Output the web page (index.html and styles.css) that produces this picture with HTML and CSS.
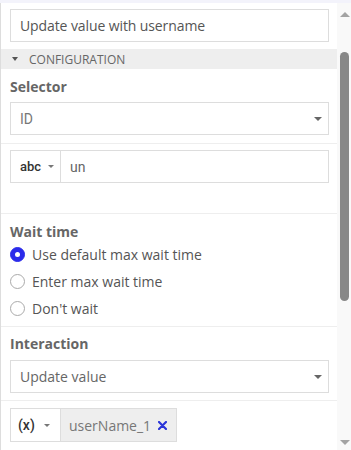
FILE: index.html
```html
<!DOCTYPE html>
<html lang="en">
<head>
    <meta charset="UTF-8">
    <meta name="viewport" content="width=device-width, initial-scale=1.0">
    <title>Step configuration</title>
    <link rel="stylesheet" href="styles.css">
</head>
<body>
    <div class="top-strip"></div>
    <div class="frame">
        <div class="panel">
            <div class="name-row">
                <div class="text-box">Update value with username</div>
            </div>

            <div class="section-header"><span class="caret header-caret"></span>Configuration</div>

            <div class="section first">
                <div class="field-label">Selector</div>
                <div class="select-box select-roboto"><span>ID</span><span class="caret"></span></div>
            </div>

            <div class="section tall">
                <div class="input-group">
                    <div class="type-btn">abc <span class="caret small"></span></div>
                    <div class="group-input">un</div>
                </div>
            </div>

            <div class="section radios">
                <div class="field-label">Wait time</div>
                <div class="radio-row"><span class="radio checked"></span>Use default max wait time</div>
                <div class="radio-row"><span class="radio"></span>Enter max wait time</div>
                <div class="radio-row"><span class="radio"></span>Don't wait</div>
            </div>

            <div class="section interaction">
                <div class="field-label">Interaction</div>
                <div class="select-box"><span>Update value</span><span class="caret"></span></div>
            </div>

            <div class="section">
                <div class="input-group var-group">
                    <div class="type-btn var-btn">(x) <span class="caret small"></span></div>
                    <div class="var-tag">userName_1
                        <svg class="tag-close" width="9" height="9" viewBox="0 0 9 9">
                            <path d="M1 1 L8 8 M8 1 L1 8" stroke="#2b35d8" stroke-width="2.2" stroke-linecap="round"/>
                        </svg>
                    </div>
                </div>
            </div>
        </div>

        <div class="scrollbar">
            <span class="sb-arrow up"></span>
            <div class="sb-track"><div class="sb-thumb"></div></div>
            <span class="sb-arrow down"></span>
        </div>
    </div>
</body>
</html>
```

FILE: styles.css
```css
body {
    font-family: "Open Sans", Arial, sans-serif;
    background-color: #ffffff;
    margin: 0;
    padding: 0;
    color: #555555;
}

.top-strip {
    height: 3px;
    background-color: #f3f3fb;
}

.frame {
    display: flex;
    height: 447px;
    overflow: hidden;
}

.panel {
    flex: 1;
    border-left: 1px solid #dddddd;
    overflow: hidden;
}

.name-row {
    padding: 6px 8px 0 9px;
}

.text-box,
.select-box {
    height: 33px;
    box-sizing: border-box;
    border: 1px solid #dddddd;
    display: flex;
    align-items: center;
    padding: 0 9px;
    font-size: 14px;
    color: #555555;
}

.text-box {
    letter-spacing: -0.1px;
}

.select-box {
    justify-content: space-between;
    padding-right: 6px;
    color: #666666;
}

.select-roboto {
    font-family: Roboto, Arial, sans-serif;
    color: #777777;
}

.caret {
    display: inline-block;
    width: 0;
    height: 0;
    border-left: 4px solid transparent;
    border-right: 4px solid transparent;
    border-top: 4px solid #666666;
}

.caret.small {
    border-left-width: 3px;
    border-right-width: 3px;
    border-top: 3px solid #777777;
}

.section-header {
    margin-top: 7px;
    height: 20px;
    background-color: #eeeeee;
    display: flex;
    align-items: center;
    padding-left: 11px;
    font-size: 12px;
    text-transform: uppercase;
    color: #666666;
}

.header-caret {
    margin-right: 11px;
    border-left-width: 3px;
    border-right-width: 3px;
    border-top-color: #555555;
}

.section {
    border-top: 1px solid #eeeeee;
    padding: 7px 8px 7px 9px;
}

.section.first {
    border-top: none;
    padding-top: 8px;
    padding-bottom: 8px;
}

.section.tall {
    padding-top: 6px;
    padding-bottom: 30px;
}

.section.radios {
    padding-top: 8px;
    padding-bottom: 4px;
}

.section.interaction .field-label {
    margin-bottom: 7px;
}

.field-label {
    font-size: 14px;
    font-weight: bold;
    line-height: 19px;
    color: #666666;
    margin-bottom: 6px;
}

.section.radios .field-label {
    margin-bottom: 0;
}

.input-group {
    display: flex;
    height: 33px;
    box-sizing: border-box;
    border: 1px solid #dddddd;
}

.type-btn {
    width: 50px;
    box-sizing: border-box;
    border-right: 1px solid #dddddd;
    display: flex;
    align-items: center;
    padding-left: 9px;
    font-family: Roboto, Arial, sans-serif;
    font-size: 13px;
    font-weight: 500;
    color: #333333;
}

.type-btn .caret {
    margin-left: 7px;
}

.group-input {
    flex: 1;
    display: flex;
    align-items: center;
    padding-left: 9px;
    font-family: Roboto, Arial, sans-serif;
    font-size: 14px;
    color: #666666;
}

.radio-row {
    height: 27px;
    display: flex;
    align-items: center;
    font-size: 14px;
    color: #555555;
}

.radio {
    width: 15px;
    height: 15px;
    box-sizing: border-box;
    border: 1px solid #aaaaaa;
    border-radius: 50%;
    margin-right: 7px;
    display: flex;
    align-items: center;
    justify-content: center;
}

.radio.checked {
    background-color: #2b2bea;
    border-color: #2b2bea;
}

.radio.checked::after {
    content: "";
    width: 5px;
    height: 5px;
    border-radius: 50%;
    background-color: #ffffff;
}

.var-group {
    display: inline-flex;
    height: 34px;
}

.var-btn {
    padding-left: 7px;
    font-size: 14px;
}

.var-btn .caret {
    margin-left: 9px;
}

.var-tag {
    display: flex;
    align-items: center;
    background-color: #eeeeee;
    padding: 0 9px 0 8px;
    font-size: 14px;
    color: #777777;
}

.tag-close {
    margin-left: 7px;
}

.scrollbar {
    width: 14px;
    background-color: #f9f9f9;
    display: flex;
    flex-direction: column;
    align-items: center;
}

.sb-arrow {
    width: 0;
    height: 0;
    border-left: 5px solid transparent;
    border-right: 5px solid transparent;
    margin-left: 1px;
}

.sb-arrow.up {
    border-bottom: 5px solid #a3a3a3;
    margin-top: 9px;
}

.sb-arrow.down {
    border-top: 5px solid #a3a3a3;
    margin-bottom: 5px;
}

.sb-track {
    flex: 1;
    width: 100%;
    padding-top: 35px;
}

.sb-thumb {
    width: 9px;
    height: 249px;
    margin-left: 3px;
    background-color: #888888;
    border-radius: 5px;
}
```
